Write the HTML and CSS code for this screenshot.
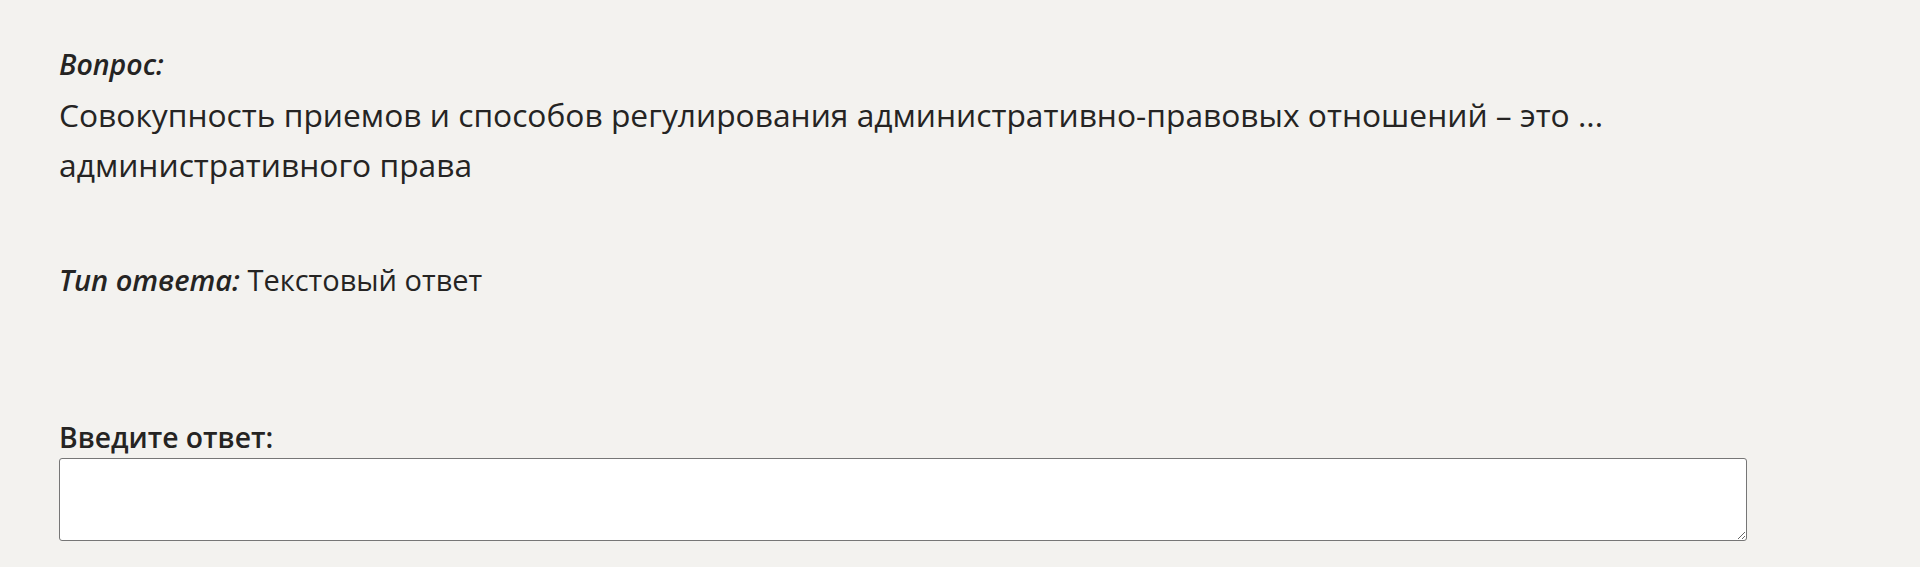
FILE: index.html
```html
<!DOCTYPE html>
<html lang="ru">
<head>
    <meta charset="UTF-8">
    <meta name="viewport" content="width=device-width, initial-scale=1.0">
    <title>Вопрос</title>
    <link rel="stylesheet" href="styles.css">
</head>
<body>
    <div class="question">
        <div class="question-label">Вопрос:</div>
        <div class="question-text">Совокупность приемов и способов регулирования административно-правовых отношений – это ... административного права</div>
    </div>

    <div class="answer-type">
        <span class="answer-type-label">Тип ответа:</span> Текстовый ответ
    </div>

    <form class="answer-form">
        <label for="answer">Введите ответ:</label>
        <textarea id="answer" name="answer"></textarea>
    </form>
</body>
</html>
```

FILE: styles.css
```css
body {
    font-family: "Open Sans", "Noto Sans", sans-serif;
    background-color: #f3f2ef;
    color: #252423;
    margin: 0;
    padding: 46px 0 0 59px;
}
.question-label {
    font-size: 28.5px;
    line-height: 36px;
    font-weight: 600;
    font-style: italic;
}
.question-text {
    margin-top: 8px;
    font-size: 31.75px;
    line-height: 50px;
    width: 1600px;
}
.answer-type {
    margin-top: 72px;
    font-size: 29px;
    line-height: 36px;
}
.answer-type-label {
    font-weight: 600;
    font-style: italic;
}
.answer-form {
    margin: 121px 0 0;
}
label {
    display: block;
    font-size: 28.3px;
    line-height: 36px;
    font-weight: 600;
    margin-bottom: 3px;
}
textarea {
    display: block;
    box-sizing: border-box;
    width: 1688px;
    height: 83px;
    margin: 0;
    background-color: #fff;
    border: 1px solid #767676;
    border-radius: 3px;
}
```
